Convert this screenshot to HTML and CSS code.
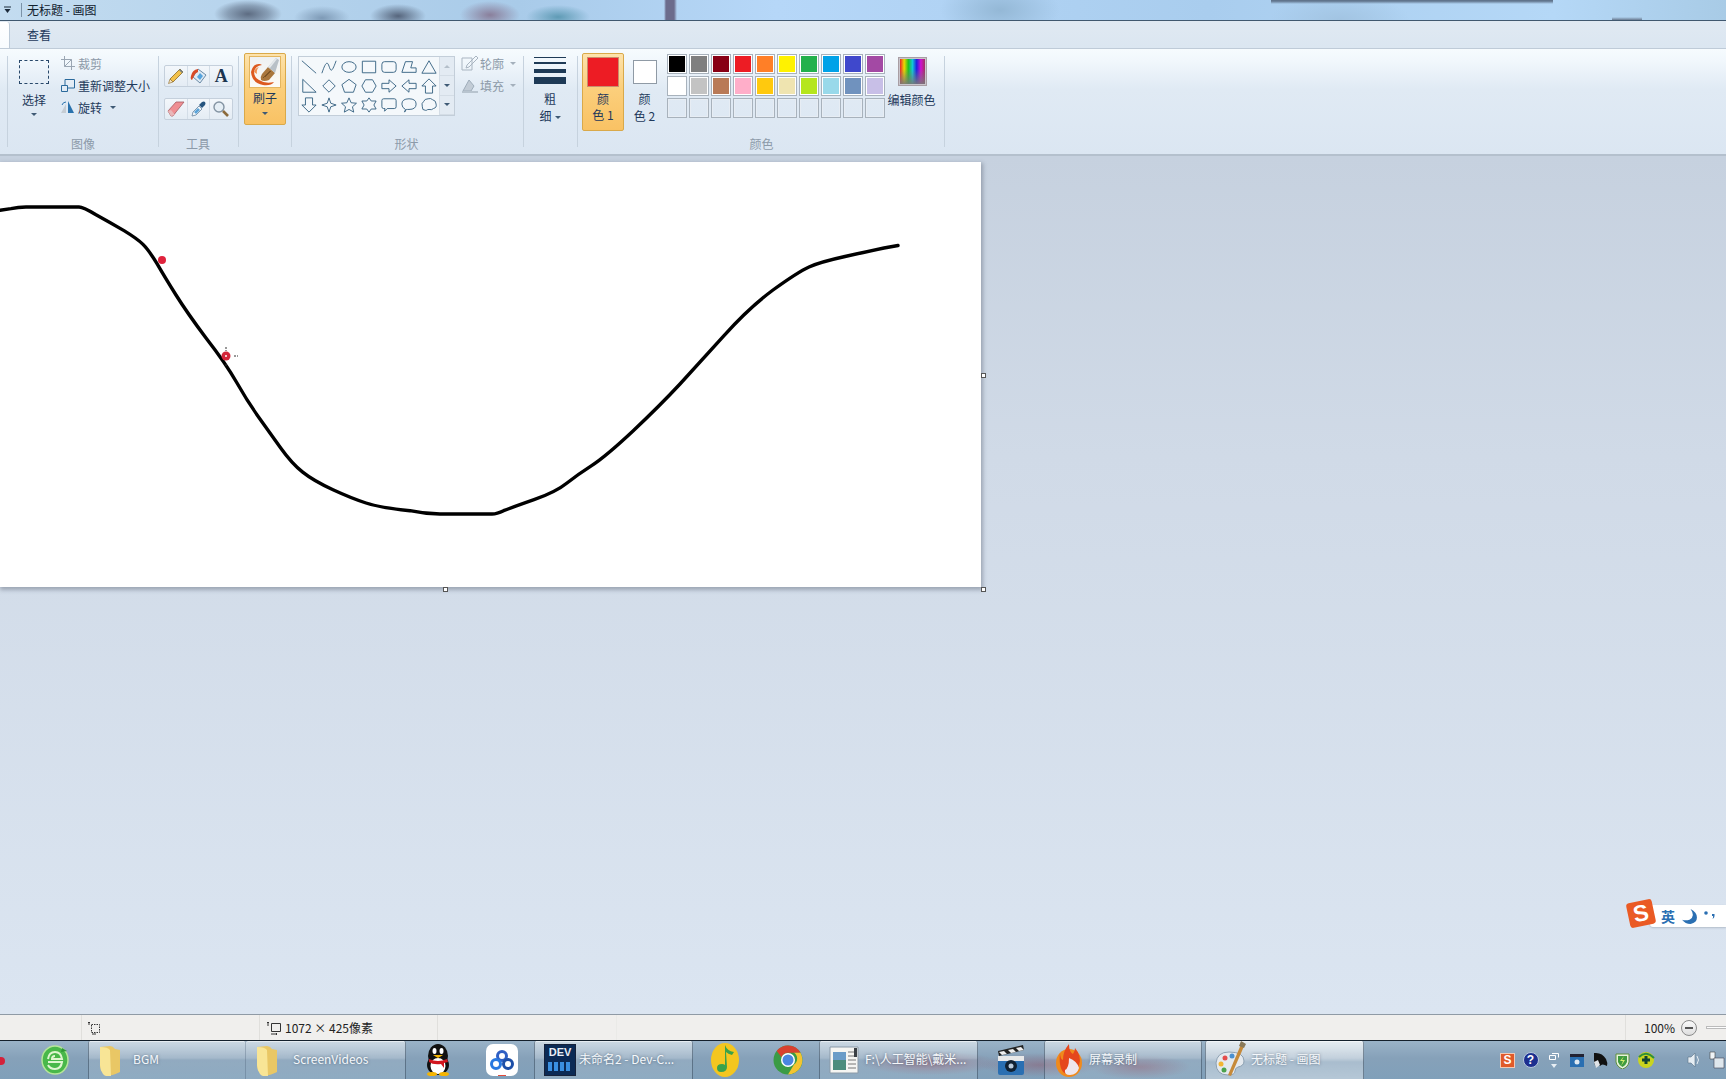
FILE: index.html
```html
<!DOCTYPE html>
<html lang="zh">
<head>
<meta charset="utf-8">
<title>无标题 - 画图</title>
<link rel="stylesheet" href="styles.css">
</head>
<body>
<div class="app">
  <header class="titlebar">
    <svg class="qat" width="10" height="8" viewBox="0 0 10 8"><path d="M1 1h7" stroke="#1b2a3a"/><path d="M1.500 3h6L4.500 7z" fill="#1b2a3a"/></svg>
    <span class="title-sep"></span>
    <span class="title-text">无标题 - 画图</span>
  </header>
  <nav class="tabs"><span class="home-tab"></span><span class="tab">查看</span></nav>

  <section class="ribbon">
    <div class="group g-image">
      <div class="group-body">
        <div class="select-col">
          <span class="select-icon"></span>
          <span class="lbl">选择</span>
          <span class="arrow"></span>
        </div>
        <div class="cmd-col">
          <div class="cmd off"><svg width="14" height="14" viewBox="0 0 14 14" fill="none" stroke="#9aa6b3"><path d="M3.500 0v10.500H14M0 3.500h10.500V14M3.500 10.500l7-7"/></svg><span>裁剪</span></div>
          <div class="cmd"><svg width="14" height="14" viewBox="0 0 14 14" fill="none" stroke="#2b6a9c"><path d="M.5 7.500h6v6h-6zM4 7V1.500h9.500V10H7"/></svg><span>重新调整大小</span></div>
          <div class="cmd"><svg width="14" height="14" viewBox="0 0 14 14"><path d="M7 1l6 12H7z" fill="#2a72ad"/><path d="M5 4L0 13h5z" fill="#c5ccd3"/><path d="M1 5q1-3 4-3" fill="none" stroke="#2a72ad"/></svg><span>旋转</span><span class="arrow inl"></span></div>
        </div>
      </div>
      <div class="group-label">图像</div>
    </div>

    <div class="group g-tools">
      <div class="group-body tools-body">
        <div class="toolrow">
          <span class="tool"><svg width="18" height="18" viewBox="0 0 18 18"><path d="M3 12L13 2l3 3L6 15z" fill="#f2c14b" stroke="#8d6a25" stroke-width=".8"/><path d="M3 12l-1.500 4.500L6 15z" fill="#f3e1c0" stroke="#8d6a25" stroke-width=".6"/><path d="M12 3l3 3 1-1-3-3z" fill="#6b7c8a"/></svg></span>
          <span class="tool"><svg width="20" height="18" viewBox="0 0 20 18"><path d="M9 2l8 6-6 8-7-6z" fill="#dfeaf4" stroke="#6a8aa6"/><path d="M8 10l3-4 3 3-3 4z" fill="#56a3dd"/><path d="M9 2Q3 3 2 9q-1 3 1 4l2-4q1-3 4-4z" fill="#d84a28"/></svg></span>
          <span class="tool txt">A</span>
        </div>
        <div class="toolrow">
          <span class="tool"><svg width="20" height="18" viewBox="0 0 20 18"><path d="M2 11l8-9h8l-8 10-3 4H5z" fill="#ef8f93" stroke="#a65c62" stroke-width=".8"/><path d="M5 16l-3-5 3-1 4 5z" fill="#e9b7b9"/></svg></span>
          <span class="tool"><svg width="18" height="18" viewBox="0 0 18 18"><path d="M2 16l1-4 6-6 3 3-6 6z" fill="#f3f7fa" stroke="#7590a8" stroke-width=".9"/><path d="M9 5l3-3q2-1 3 0t0 3l-3 3z" fill="#25547f"/><path d="M4 12l4-4 2 2-4 4z" fill="#5aa3d8"/></svg></span>
          <span class="tool"><svg width="18" height="18" viewBox="0 0 18 18"><circle cx="7" cy="7" r="5" fill="#e5eef5" stroke="#8494a3" stroke-width="1.400"/><path d="M11 11l5 5" stroke="#8b6a3c" stroke-width="2.600"/></svg></span>
        </div>
      </div>
      <div class="group-label">工具</div>
    </div>

    <div class="group g-brush">
      <div class="group-body">
        <div class="brush-btn">
          <span class="brush-icon"><svg width="30" height="30" viewBox="0 0 30 30"><path d="M1 15Q3 6 10 7l2 1Q5 9 4 15q0 5 5 8 6 4 15 2-3 4-11 3Q2 26 1 15z" fill="#dd5a1f"/><path d="M4 15q1-4 5-5-3 3-2 7z" fill="#f09050"/><path d="M12 17l6-7 7 6-6 7q-5 2-8 0-1-3 1-6z" fill="#a9763c"/><path d="M15 20l6-6M13 21l7-7" stroke="#7d5425"/><path d="M18 10l8-9 3 2-4 13z" fill="#b8c0c7"/><path d="M18 10l8-9 1 1-7 9z" fill="#e4e8eb"/></svg></span>
          <span class="lbl">刷子</span>
          <span class="arrow"></span>
        </div>
      </div>
    </div>

    <div class="group g-shapes">
      <div class="group-body">
        <div class="gallery">
          <div class="shape-grid">
            <svg class="sh" viewBox="0 0 18 18"><path d="M1 2l16 14"/></svg>
            <svg class="sh" viewBox="0 0 18 18"><path d="M1 16C5 4 7 2 9 8s3 8 8-6"/></svg>
            <svg class="sh" viewBox="0 0 18 18"><ellipse cx="9" cy="9" rx="8" ry="6"/></svg>
            <svg class="sh" viewBox="0 0 18 18"><path d="M1.500 2.500h15v13h-15z"/></svg>
            <svg class="sh" viewBox="0 0 18 18"><rect x="1" y="3" width="16" height="12" rx="3"/></svg>
            <svg class="sh" viewBox="0 0 18 18"><path d="M1 15L5 3h8l-2 7h6v5z"/></svg>
            <svg class="sh" viewBox="0 0 18 18"><path d="M9 2l8 14H1z"/></svg>
            <svg class="sh" viewBox="0 0 18 18"><path d="M2 1.500V16h15z"/></svg>
            <svg class="sh" viewBox="0 0 18 18"><path d="M9 2l7 7-7 7-7-7z"/></svg>
            <svg class="sh" viewBox="0 0 18 18"><path d="M9 1.500l8 6-3 8.500H4L1 7.500z"/></svg>
            <svg class="sh" viewBox="0 0 18 18"><path d="M5 2h8l4 7-4 7H5L1 9z"/></svg>
            <svg class="sh" viewBox="0 0 18 18"><path d="M1 6h8V2l8 7-8 7v-4H1z"/></svg>
            <svg class="sh" viewBox="0 0 18 18"><path d="M17 6H9V2L1 9l8 7v-4h8z"/></svg>
            <svg class="sh" viewBox="0 0 18 18"><path d="M9 1l8 8h-4v8H5V9H1z"/></svg>
            <svg class="sh" viewBox="0 0 18 18"><path d="M5 1h8v8h4l-8 8-8-8h4z"/></svg>
            <svg class="sh" viewBox="0 0 18 18"><path d="M9 1l2 6 6 2-6 2-2 6-2-6-6-2 6-2z"/></svg>
            <svg class="sh" viewBox="0 0 18 18"><path d="M9 1l2.400 5.500 6 .5-4.500 4 1.400 6L9 14l-5.300 3 1.400-6L.6 7l6-.5z"/></svg>
            <svg class="sh" viewBox="0 0 18 18"><path d="M9 1l2.500 3.500H17l-2.500 4.500 2.500 4.500h-5.500L9 17l-2.500-3.500H1L3.500 9 1 4.500h5.500z"/></svg>
            <svg class="sh" viewBox="0 0 18 18"><path d="M3 2h12q2 0 2 2v7q0 2-2 2H7l-3 3 .5-3H3q-2 0-2-2V4q0-2 2-2z"/></svg>
            <svg class="sh" viewBox="0 0 18 18"><path d="M5 14Q1 12 1 8q0-6 8-6t8 6-8 6q-2 0-3 0l-2 3z"/></svg>
            <svg class="sh" viewBox="0 0 18 18"><path d="M5 15Q1 15 1.500 11 0 7 3 5q1-3 5-3 3-1 5 1 4 1 4 5 1 4-3 5-2 2-5 1-2 0-3 1z"/></svg>
          </div>
          <div class="gallery-scroll">
            <span class="gs up"></span>
            <span class="gs down"></span>
            <span class="gs more"></span>
          </div>
        </div>
        <div class="style-col">
          <div class="cmd off"><svg width="18" height="16" viewBox="0 0 18 16" fill="none" stroke="#a9b5c1"><path d="M1 3h10v12H1zM6 10l9-9 2 2-9 9-3 1z"/></svg><span>轮廓</span><span class="arrow inl"></span></div>
          <div class="cmd off"><svg width="18" height="16" viewBox="0 0 18 16"><path d="M2 14l6-11 5 6-3 5z" fill="#c2ccd6" stroke="#9fadba"/><path d="M1 14h16v2H1z" fill="#b8c4cf"/></svg><span>填充</span><span class="arrow inl"></span></div>
        </div>
      </div>
      <div class="group-label shapes-label">形状</div>
    </div>

    <div class="group g-size">
      <div class="group-body size-body">
        <div class="size-lines"><i class="l1"></i><i class="l2"></i><i class="l3"></i><i class="l4"></i></div>
        <span class="lbl">粗</span>
        <span class="lbl">细<span class="arrow inl"></span></span>
      </div>
    </div>

    <div class="group g-colors">
      <div class="group-body">
        <div class="color-btn active">
          <span class="swatch-big"></span>
          <span class="lbl">颜</span>
          <span class="lbl">色 1</span>
        </div>
        <div class="color-btn second">
          <span class="swatch-small"></span>
          <span class="lbl">颜</span>
          <span class="lbl">色 2</span>
        </div>
        <div class="palette">
          <span class="c" style="--c:#000000"></span><span class="c" style="--c:#7f7f7f"></span><span class="c" style="--c:#880015"></span><span class="c" style="--c:#ed1c24"></span><span class="c" style="--c:#ff7f27"></span><span class="c" style="--c:#fff200"></span><span class="c" style="--c:#22b14c"></span><span class="c" style="--c:#00a2e8"></span><span class="c" style="--c:#3f48cc"></span><span class="c" style="--c:#a349a4"></span>
          <span class="c" style="--c:#ffffff"></span><span class="c" style="--c:#c3c3c3"></span><span class="c" style="--c:#b97a57"></span><span class="c" style="--c:#ffaec9"></span><span class="c" style="--c:#ffc90e"></span><span class="c" style="--c:#efe4b0"></span><span class="c" style="--c:#b5e61d"></span><span class="c" style="--c:#99d9ea"></span><span class="c" style="--c:#7092be"></span><span class="c" style="--c:#c8bfe7"></span>
          <span class="c e"></span><span class="c e"></span><span class="c e"></span><span class="c e"></span><span class="c e"></span><span class="c e"></span><span class="c e"></span><span class="c e"></span><span class="c e"></span><span class="c e"></span>
        </div>
        <div class="edit-col">
          <span class="rainbow"></span>
          <span class="lbl">编辑颜色</span>
        </div>
      </div>
      <div class="group-label">颜色</div>
    </div>
  </section>

  <main class="workspace">
    <div class="canvas">
      <svg class="drawing" width="981" height="425" viewBox="0 0 981 425">
        <path d="M0 48.300L11 46.600Q18 45 26 45L79 45Q83 45 96 52.700Q110 60.400 124 68.600Q137.600 76.900 143 82.400Q148.600 87.900 157 101.600Q165 115.400 176 133Q187 150.600 206 176Q225.700 201.300 236.700 220.500Q247.700 239.800 258.700 255.200Q269.700 270.600 280.700 286Q291.700 301.400 302.700 310.200Q313.700 319 333 327.800Q352.300 336.700 366 341Q379.800 345.500 410 348.700Q425 352 440 352L492 352Q497 352 503.600 348.700Q511.900 345.500 534 337.700Q555.900 330 567 321Q577.900 312.400 591.600 303.600Q605.400 294.800 633 269Q660.500 243 680 222Q699 201.300 724 173.700Q748.500 146.200 773 128Q798 110 809 105Q820 100 845 94.500Q869.600 89 884 86L898 83.500" fill="none" stroke="#000" stroke-width="3.400" stroke-linecap="round" stroke-linejoin="round"/>
        <circle cx="162" cy="98" r="4" fill="#e0233d"/>
        <circle cx="226" cy="194" r="4.500" fill="#d3263a"/>
        <circle cx="226" cy="194" r="1" fill="#fff"/>
        <path d="M226 185v2M226 188v1M234 194h2M237 194h1M226 202v2" stroke="#333" fill="none"/>
      </svg>
      <span class="handle h-r"></span>
      <span class="handle h-b"></span>
      <span class="handle h-c"></span>
    </div>
    <div class="ime">
      <span class="ime-s">S</span>
      <span class="ime-ying">英</span>
      <svg class="ime-moon" width="17" height="17" viewBox="0 0 16 16"><path d="M9 1q5 7-1 10-4 1-7 0 3 4 8 4 6-1 6-6 0-5-6-8z" fill="#2a6fb2"/></svg>
      <svg class="ime-dots" width="14" height="14" viewBox="0 0 14 14"><circle cx="3" cy="4" r="1.800" fill="#2a6fb2"/><path d="M9 5h2.500v2q0 2-2 3 1-2 .5-3H9z" fill="#2a6fb2"/></svg>
    </div>
  </main>

  <footer class="statusbar">
    <span class="pane p1"></span>
    <span class="pane p2"><svg width="14" height="14" viewBox="0 0 14 14" fill="none" stroke="#333"><path d="M3.500 3.500h8v8h-8z" stroke-dasharray="1.500 1"/><path d="M1 4V1M0 2l1-1 1 1M4 13h4" /></svg></span>
    <span class="pane p3"><svg width="16" height="14" viewBox="0 0 16 14" fill="none" stroke="#333"><path d="M5.500 2.500h9v8h-9z"/><path d="M2 5V1M1 2l1-1 1 1M5 13h6M10 12l1 1-1 1"/></svg><span>1072 × 425像素</span></span>
    <span class="pane p4"></span>
    <span class="pane p5"></span>
    <span class="zoom"><span class="zoom-val">100%</span><span class="zoom-minus"></span><span class="zoom-track"></span></span>
  </footer>

  <div class="taskbar">
    <span class="start-area">
      <span class="red-bit"></span>
      <svg class="ie" width="30" height="32" viewBox="0 0 30 32"><ellipse cx="15" cy="16" rx="13" ry="14" fill="#49b84a" stroke="#b6e59a" stroke-width="1.500"/><path d="M8 15q1-7 7-7 6 0 7 7H12q0-3 3-3M8 18h14q-1 7-7 7-5 0-7-4" fill="none" stroke="#dff5d0" stroke-width="2"/><path d="M22 4l5 3-6 1z" fill="#2f9a35"/></svg>
    </span>
    <div class="tb t-bgm"><svg class="ic" width="24" height="32" viewBox="0 0 24 32"><path d="M1 3l10-1q3 0 5 3l5 1v22q-9 5-14 2-5-2-6-8z" fill="#e9c765"/><path d="M1 3q8 0 10 3l1 26q-6 1-8-2-3-4-3-9z" fill="#f8e596"/></svg><span class="tb-text">BGM</span></div>
    <div class="tb t-sv"><svg class="ic" width="24" height="32" viewBox="0 0 24 32"><path d="M1 3l10-1q3 0 5 3l5 1v22q-9 5-14 2-5-2-6-8z" fill="#e9c765"/><path d="M1 3q8 0 10 3l1 26q-6 1-8-2-3-4-3-9z" fill="#f8e596"/></svg><span class="tb-text">ScreenVideos</span></div>
    <span class="slot s64"><svg width="28" height="34" viewBox="0 0 28 34"><ellipse cx="14" cy="13" rx="10" ry="12" fill="#111"/><ellipse cx="14" cy="22" rx="11" ry="10" fill="#111"/><ellipse cx="14" cy="23" rx="7.500" ry="8" fill="#fff"/><ellipse cx="10.500" cy="8" rx="2" ry="3" fill="#fff"/><ellipse cx="17.500" cy="8" rx="2" ry="3" fill="#fff"/><path d="M9 12h10l-5 3z" fill="#f6b500"/><path d="M5 16q9 4 18 0l1 3-4 1v5l-3-4q-8 1-12-2z" fill="#d2161e"/><ellipse cx="8" cy="31" rx="5" ry="2" fill="#f6b500"/><ellipse cx="20" cy="31" rx="5" ry="2" fill="#f6b500"/></svg></span>
    <span class="slot s64"><svg width="32" height="32" viewBox="0 0 32 32"><rect width="32" height="32" rx="7" fill="#fff"/><circle cx="16" cy="12" r="4.500" fill="none" stroke="#2f5fc4" stroke-width="3"/><circle cx="10" cy="20" r="4.500" fill="none" stroke="#2878e0" stroke-width="3"/><circle cx="22" cy="20" r="4.500" fill="none" stroke="#1d4fa8" stroke-width="3"/><path d="M12 31h8v1h-8z" fill="#e04a3a"/></svg></span>
    <div class="tb t-dev"><span class="dev-ic"><b>DEV</b><i></i></span><span class="tb-text">未命名2 - Dev-C...</span></div>
    <span class="slot s64"><svg width="30" height="36" viewBox="0 0 30 36"><ellipse cx="15" cy="18" rx="14" ry="17" fill="#f4c61f"/><path d="M15 3q2 6 9 7l-2 3q-4-1-6-3l1 15q0 5-6 5-4 0-4-4t5-4q2 0 3 1z" fill="#3aa24a"/></svg></span>
    <span class="slot s62"><svg width="30" height="36" viewBox="0 0 30 36"><circle cx="15" cy="18" r="14.500" fill="#3a9b45"/><path d="M15 3.500a14.500 14.500 0 0 1 12.500 7.300H15a7 7 0 0 0-6.500 4.500L3.700 9A14.500 14.500 0 0 1 15 3.500z" fill="#d8402f"/><path d="M27.500 10.800A14.500 14.500 0 0 1 15 32.500l6-10a7 7 0 0 0 0-11.700z" fill="#f4c430"/><circle cx="15" cy="18" r="7" fill="#fff"/><circle cx="15" cy="18" r="5.500" fill="#4a86e0"/></svg></span>
    <div class="tb t-f"><svg class="ic" width="30" height="30" viewBox="0 0 30 30"><path d="M1 2h28v26H1z" fill="#f5f5f2" stroke="#8b9aa8"/><path d="M4 7h13v18H4z" fill="#4c8d7d"/><path d="M4 7h13v8H4z" fill="#6a9cc8"/><path d="M19 7h8M19 11h8M19 15h8M19 19h8M19 23h8" stroke="#777"/><path d="M25 3h3v9h-3z" fill="#3a3f44"/></svg><span class="tb-text">F:\人工智能\戴米...</span></div>
    <span class="slot s66"><svg width="28" height="32" viewBox="0 0 28 32"><path d="M1 7l25-6 1 5-25 6z" fill="#222"/><path d="M2 8l5-1 3 3-5 1zM11 6l5-1 3 3-5 1zM19 4l5-1 3 3-5 1z" fill="#eee"/><rect x="1" y="12" width="26" height="19" rx="2" fill="#2a6fb2"/><rect x="1" y="12" width="26" height="5" fill="#e9e9e9"/><circle cx="14" cy="22" r="6" fill="#123"/><circle cx="14" cy="22" r="2.500" fill="#bcd"/></svg></span>
    <div class="tb t-rec"><svg class="ic" width="28" height="36" viewBox="0 0 28 36"><ellipse cx="14" cy="21" rx="13" ry="14" fill="#f08a1c"/><path d="M5 10q0 7 3 8 0-9 6-16 0 8 4 10 2-3 2-6 7 8 4 17-3 10-12 9Q3 30 5 10z" fill="#e5471d"/><path d="M14 16q8 3 10 10-2 7-9 7-6 0-5-5 4-2 4-12z" fill="#eee6ee"/></svg><span class="tb-text">屏幕录制</span></div>
    <div class="tb t-paint active"><svg class="ic" width="32" height="38" viewBox="0 0 32 38"><path d="M14 11Q2 11 1 22q0 12 12 12 7 0 7-4 0-3 3-4 6-1 6-6 0-9-15-9z" fill="#e4e9ee" stroke="#8da1b2"/><circle cx="10" cy="17" r="2.500" fill="#e34c4c"/><circle cx="6" cy="23" r="2.500" fill="#f3b533"/><circle cx="9" cy="29" r="2.500" fill="#4ca24c"/><circle cx="17" cy="15" r="2.500" fill="#4a90d0"/><path d="M27 1l3 2-14 32-3-1z" fill="#c68a3a"/><path d="M26 0l5 3-2 4-5-2z" fill="#8a7a5a"/></svg><span class="tb-text">无标题 - 画图</span></div>
    <div class="tray">
      <span class="tr"><span class="tr-s">S</span></span>
      <span class="tr"><span class="tr-help">?</span></span>
      <span class="tr"><svg width="12" height="18" viewBox="0 0 12 18"><path d="M1.500 4.500h6v4h-6zM4 2.500h6.500v4" fill="none" stroke="#fff"/><path d="M3 13h6l-3 4z" fill="#e8eef4"/></svg></span>
      <span class="tr"><svg width="16" height="14" viewBox="0 0 16 14"><rect x="1" y="4" width="14" height="10" fill="#2a6fb2"/><path d="M1 1h14v3H1z" fill="#223"/><circle cx="8" cy="9" r="2.500" fill="#dfe9f2"/></svg></span>
      <span class="tr"><svg width="18" height="16" viewBox="0 0 18 16"><path d="M3 1q8-1 12 6 2 4 1 7-5-3-7 0-2-2-4 1-2-3-2-7z" fill="#111"/><path d="M3 10l4-2 2 5-4 3z" fill="#dfe3e8"/></svg></span>
      <span class="tr"><svg width="15" height="17" viewBox="0 0 15 17"><path d="M1 2h13v8q-1 5-6.500 7Q2 15 1 10z" fill="#e7f2da" stroke="#5e8f3e"/><path d="M3 4h9v6q-1 3-4.500 5Q4 13 3 10z" fill="#3f9b3f"/><path d="M9 4L5 9h3l-2 5 4-6H7z" fill="#d7ef6a"/></svg></span>
      <span class="tr"><svg width="18" height="16" viewBox="0 0 18 16"><circle cx="9" cy="8" r="8" fill="#c9d41f"/><path d="M2 5q7-7 15 1" fill="none" stroke="#2e8f3a" stroke-width="2"/><path d="M7.500 4h3v2.500H13v3h-2.500V12h-3V9.500H5v-3h2.500z" fill="#143"/></svg></span>
      <span class="tr tr-vol"><svg width="14" height="16" viewBox="0 0 14 16"><path d="M1 5h3l4-4v14l-4-4H1z" fill="#e6edf3" stroke="#5a7288" stroke-width=".6"/><path d="M10 4q3 4 0 8" fill="none" stroke="#e6edf3"/></svg></span>
      <span class="tr"><svg width="16" height="18" viewBox="0 0 16 18"><path d="M1 1h5v7H1z" fill="#f0f4f7" stroke="#444" stroke-width=".6"/><path d="M5 7h10v10H5z" fill="#dfe7ed" stroke="#445" stroke-width=".6"/></svg></span>
    </div>
  </div>
</div>
</body>
</html>
```

FILE: styles.css
```css
* { box-sizing: border-box; }
html, body { margin: 0; height: 100%; overflow: hidden; }
body { font-family: "Noto Sans CJK SC", "Noto Sans", sans-serif; font-size: 12px; color: #1e395b; }
.app { width: 1726px; height: 1079px; display: flex; flex-direction: column; overflow: hidden; }

/* title bar */
.titlebar {
  height: 21px; flex: none; display: flex; align-items: center; padding-left: 3px;
  border-bottom: 1px solid #40586f;
  background:
    radial-gradient(ellipse 34px 14px at 248px 14px, #5d6c82 0%, rgba(93,108,130,.5) 60%, rgba(93,108,130,0) 100%),
    radial-gradient(ellipse 28px 12px at 322px 18px, #7e9ab6 0%, rgba(126,154,182,0) 100%),
    radial-gradient(ellipse 28px 12px at 398px 16px, #56657c 0%, rgba(86,101,124,0) 100%),
    radial-gradient(ellipse 30px 14px at 490px 15px, #8a7f9b 0%, rgba(138,127,155,0) 100%),
    radial-gradient(ellipse 32px 12px at 558px 17px, #5f9bb5 0%, rgba(95,155,181,0) 100%),
    linear-gradient(90deg, rgba(0,0,0,0) 664px, #6c6c8c 666px, #6c6c8c 674px, rgba(0,0,0,0) 677px),
    linear-gradient(180deg, #60748c 0, #60748c 1px, rgba(96,116,140,0) 4px) 1271px 0 / 282px 21px no-repeat,
    linear-gradient(180deg, rgba(90,100,120,0) 17px, #6a7a90 20px) 1612px 0 / 30px 21px no-repeat,
    radial-gradient(ellipse 60px 30px at 1000px 10px, #94b8d6 0%, rgba(148,184,214,0) 100%),
    radial-gradient(ellipse 70px 25px at 1340px 20px, #a2c4e2 0%, rgba(162,196,226,0) 100%),
    linear-gradient(90deg, #c3dcf0 0%, #a9cbe9 30%, #b6d7f8 45%, #a9cdee 70%, #b5d8f7 90%, #a8cbe6 100%);
}
.qat { margin-left: 0; }
.title-sep { width: 1px; height: 14px; background: #7b93a8; margin-left: 8px; }
.title-text { margin-left: 5px; color: #10202e; line-height: 20px; }

/* tabs */
.tabs {
  height: 27px; flex: none; display: flex; align-items: flex-end;
  background: linear-gradient(180deg, #e0e9f2, #dbe6f1);
}
.home-tab { width: 10px; height: 26px; background: linear-gradient(180deg, #fff, #f7fbfe); border-right: 1px solid #bccad8; border-top-right-radius: 3px; }
.tab { margin-left: 17px; line-height: 26px; height: 26px; }

/* ribbon */
.ribbon {
  height: 108px; flex: none; display: flex; padding-left: 7px; align-items: flex-start;
  border-top: 1px solid #bfcbd8; border-bottom: 2px solid #b4c0cd;
  background: linear-gradient(180deg, #f6fbfe 0, #f1f7fc 12px, #e0eaf4 40px, #dbe6f2 100%);
}
.group { height: 103px; flex: none; display: flex; flex-direction: column; position: relative; }
.group::after { content: ""; position: absolute; right: 0; top: 7px; bottom: 5px; width: 1px; background: #c6d2de; }
.g-image::before { content: ""; position: absolute; left: 0; top: 7px; bottom: 5px; width: 1px; background: #c6d2de; }
.group-body { flex: 1; display: flex; min-height: 0; }
.group-label { height: 16px; line-height: 16px; text-align: center; color: #8c9aa9; flex: none; }
.shapes-label { padding-right: 3px; }
.g-image { width: 152px; }
.g-tools { width: 80px; }
.g-tools .group-label { padding-right: 2px; }
.g-brush { width: 53px; }
.g-shapes { width: 232px; }
.g-size { width: 54px; }
.g-colors { width: 367px; }

.lbl { display: block; line-height: 17px; text-align: center; white-space: nowrap; }
.arrow { display: block; width: 0; height: 0; margin: 5px auto 0; border: 3px solid transparent; border-top: 3px solid #3f5a75; border-bottom: 0; }
.arrow.inl { display: inline-block; margin: 0 0 0 5px; vertical-align: middle; }

.select-col { width: 30px; margin-left: 12px; padding-top: 11px; }
.select-icon { display: block; width: 30px; height: 24px; border: 1px dashed #28486a; }
.select-col .lbl { margin-top: 7px; }
.cmd-col { margin-left: 12px; padding-top: 3px; }
.cmd { height: 22px; display: flex; align-items: center; gap: 3px; white-space: nowrap; }
.cmd svg { flex: none; }
.cmd.off { color: #8d9aa8; }

.tools-body { flex-direction: column; padding: 16px 0 0 5px; gap: 11px; }
.toolrow { width: 69px; height: 22px; display: flex; border: 1px solid #c5d0dc; border-radius: 2px; background: linear-gradient(180deg, #f3f7fb, #e4ecf4); }
.tool { flex: 1; display: flex; align-items: center; justify-content: center; border-right: 1px solid #d3dde7; }
.tool:last-child { border-right: 0; }
.tool.txt { font-family: "Liberation Serif", serif; font-weight: 700; font-size: 18px; color: #1c3550; }

.brush-btn {
  width: 42px; height: 72px; margin: 4px 0 0 5px; padding-top: 2px; text-align: center;
  border: 1px solid #d9a94a; border-radius: 2px;
  background: linear-gradient(180deg, #fde3ac 0%, #fbcf7c 45%, #f9c264 100%);
}
.brush-icon { display: block; width: 32px; height: 32px; margin: 0 auto 1px; border: 1px solid #e3b660; background: linear-gradient(#eef1f3, #fdfaf4); }
.brush-btn .lbl { margin-top: 1px; color: #1e395b; }
.brush-btn .arrow { margin-top: 6px; }

.gallery { width: 157px; height: 60px; margin: 7px 0 0 6px; display: flex; border: 1px solid #c3ced9; background: #f4f8fb; }
.shape-grid { width: 140px; display: grid; grid-template-columns: repeat(7, 20px); grid-template-rows: repeat(3, 19.33px); align-items: center; justify-items: center; }
.sh { width: 16px; height: 16px; fill: none; stroke: #2f5d7d; stroke-width: 1; display: block; }
.gallery-scroll { flex: 1; display: flex; flex-direction: column; border-left: 1px solid #d4dde6; background: #e3ebf3; }
.gs { flex: 1; display: flex; align-items: center; justify-content: center; border-bottom: 1px solid #d4dde6; }
.gs::before { content: ""; border: 3px solid transparent; }
.gs.up::before { border-bottom: 3px solid #b4bfca; border-top: 0; }
.gs.down::before { border-top: 3px solid #3f5a75; border-bottom: 0; }
.gs.more::before { border-top: 3px solid #3f5a75; border-bottom: 0; box-shadow: 0 -3px 0 -2px #3f5a75; }
.style-col { margin-left: 6px; padding-top: 3px; }
.style-col .cmd { gap: 1px; }
.style-col .arrow.inl { border-top-color: #a4b0bc; }

.size-body { flex-direction: column; padding: 8px 0 0 10px; }
.size-lines { width: 32px; height: 27px; display: flex; flex-direction: column; }
.size-lines i { display: block; background: #1e3a56; }
.size-lines .l1 { height: 1px; }
.size-lines .l2 { height: 2px; margin-top: 4px; }
.size-lines .l3 { height: 4px; margin-top: 5px; }
.size-lines .l4 { height: 7px; margin-top: 4px; }
.size-body .lbl { width: 32px; }
.size-body .lbl:nth-child(2) { margin-top: 6px; }
.size-body .arrow.inl { margin-left: 3px; }

.color-btn { width: 42px; height: 78px; margin: 4px 0 0 4px; border: 1px solid transparent; border-radius: 2px; text-align: center; flex: none; }
.color-btn.active { border-color: #d9a94a; background: linear-gradient(180deg, #fde3ac 0%, #fbcf7c 45%, #f9c264 100%); padding-top: 3px; }
.color-btn.active .lbl { line-height: 16px; }
.swatch-big { display: block; width: 32px; height: 30px; margin: 0 auto 4px; background: #ed1c24; border: 1px solid #c98e6e; }
.color-btn.second { width: 41px; margin-left: 0; padding-top: 6px; }
.swatch-small { display: block; width: 24px; height: 24px; margin: 0 auto 6px; background: #fff; border: 1px solid #8f9aa5; }
.palette { display: grid; grid-template-columns: repeat(10, 20px); grid-template-rows: repeat(3, 20px); gap: 2px; margin: 5px 0 0 2px; height: 64px; }
.c { display: block; border: 1px solid #a8b2bc; background: var(--c); box-shadow: inset 0 0 0 1px #fff; }
.c.e { background: transparent; box-shadow: inset 0 0 0 1px #e7edf4; }
.edit-col { width: 52px; margin: 0 0 0 1px; padding-top: 8px; }
.rainbow {
  display: block; width: 29px; height: 29px; margin: 0 auto 5px; border: 2px solid #c9c5cb; outline: 1px solid #a89ea4; outline-offset: -1px;
  background: linear-gradient(180deg, rgba(255,255,255,0) 40%, rgba(120,120,120,.9) 100%), linear-gradient(90deg, #e8242a, #f0d800, #20c020, #10c8d8, #2020e0, #d010d0, #a03060);
}
.edit-col .lbl { margin-left: -1px; }

/* workspace */
.workspace { flex: 1; min-height: 0; padding-top: 6px; position: relative; background: linear-gradient(180deg, #c6d1df 0%, #d0dae7 35%, #dbe5f1 100%); }
.canvas { width: 981px; height: 425px; background: #fff; position: relative; box-shadow: 1px 2px 4px 1px rgba(90,100,115,.45); }
.drawing { display: block; }
.handle { position: absolute; width: 5px; height: 5px; background: #fff; border: 1px solid #555; }
.h-r { left: 981px; top: 211px; }
.h-b { left: 443px; top: 425px; }
.h-c { left: 981px; top: 425px; }

.ime { position: absolute; top: 749px; right: 0; width: 76px; height: 22px; background: #fff; display: flex; align-items: center; padding-left: 11px; border-radius: 3px 0 0 3px; box-shadow: 0 1px 2px rgba(90,100,115,.3); }
.ime-s { position: absolute; left: -22px; top: -4px; width: 26px; height: 25px; border-radius: 3px; background: #ea5a24; color: #fff; font: 700 23px/25px "Liberation Sans", sans-serif; text-align: center; transform: rotate(-12deg); }
.ime-ying { color: #2a6fb2; font-weight: 700; font-size: 14px; line-height: 20px; }
.ime-moon { margin-left: 6px; }
.ime-dots { margin-left: 5px; }

/* status bar */
.statusbar { height: 26px; flex: none; display: flex; background: #f0efed; border-top: 1px solid #8f9aa5; color: #222; }
.pane { display: flex; align-items: center; gap: 3px; border-right: 1px solid #e0dfdc; }
.p1 { width: 82px; }
.p2 { width: 178px; padding-left: 6px; }
.p3 { width: 178px; padding-left: 6px; }
.p4 { width: 179px; border-right-color: #eaeae7; }
.p5 { width: 1009px; }
.zoom { flex: 1; display: flex; align-items: center; }
.zoom-val { margin-left: 18px; }
.zoom-minus { width: 16px; height: 16px; margin-left: 6px; border-radius: 50%; border: 1px solid #8a8a8a; background: linear-gradient(90deg, #555, #555) center / 8px 2px no-repeat, linear-gradient(#fafafa, #dedede); }
.zoom-track { flex: 1; height: 3px; margin-left: 9px; background: #fdfdfd; border: 1px solid #bbb; border-right: 0; }

/* taskbar */
.taskbar {
  height: 39px; flex: none; display: flex; align-items: stretch; border-top: 1px solid #14202c;
  background:
    radial-gradient(ellipse 70px 12px at 930px 22px, rgba(150,90,110,.55), rgba(150,90,110,0)),
    radial-gradient(ellipse 60px 12px at 1040px 24px, rgba(140,80,100,.45), rgba(140,80,100,0)),
    radial-gradient(ellipse 50px 12px at 1140px 26px, rgba(140,80,100,.45), rgba(140,80,100,0)),
    linear-gradient(180deg, #9ab3c8 0%, #86a1b9 45%, #80a0ba 100%);
}
.start-area { width: 88px; flex: none; display: flex; align-items: center; position: relative; }
.red-bit { position: absolute; left: 0; top: 16px; width: 5px; height: 8px; background: #d4213a; border-radius: 0 4px 4px 0; }
.ie { margin-left: 40px; }
.tb {
  flex: none; display: flex; align-items: center; color: #f5f8fb; white-space: nowrap; overflow: hidden;
  border: 1px solid rgba(50,70,90,.55); border-width: 0 1px; border-radius: 2px 2px 0 0;
  background: linear-gradient(180deg, rgba(255,255,255,.5) 0%, rgba(255,255,255,.25) 45%, rgba(255,255,255,.1) 50%, rgba(255,255,255,.12) 100%);
  box-shadow: inset 0 1px 0 rgba(255,255,255,.5);
}
.tb-text { font-size: 12px; margin-top: -3px; text-shadow: 0 0 3px rgba(40,60,80,.6); }
.t-bgm { width: 158px; padding-left: 10px; border-right-color: rgba(70,90,110,.3); }
.t-bgm .tb-text { margin-left: 10px; }
.t-sv { width: 160px; padding-left: 10px; border-left: 0; }
.t-sv .tb-text { margin-left: 13px; }
.t-dev { width: 159px; padding-left: 9px; }
.t-dev .tb-text { margin-left: 3px; }
.dev-ic { width: 32px; height: 32px; flex: none; background: #0b2a55; color: #e8eef6; border: 1px solid #15213a; display: flex; flex-direction: column; align-items: center; font: 700 11px/14px "Liberation Sans", sans-serif; }
.dev-ic i { display: block; width: 24px; height: 9px; margin-top: 3px; background: repeating-linear-gradient(90deg, #3a8fe0 0 4px, #0b2a55 4px 6px); }
.t-f { width: 159px; padding-left: 9px; }
.t-f .tb-text { margin-left: 6px; }
.t-rec { width: 158px; padding-left: 10px; margin-right: 3px; }
.t-rec .tb-text { margin-left: 6px; }
.t-paint { width: 159px; padding-left: 9px; background: linear-gradient(180deg, rgba(255,255,255,.75) 0%, rgba(255,255,255,.5) 45%, rgba(255,255,255,.3) 55%, rgba(255,255,255,.42) 100%); }
.t-paint .tb-text { margin-left: 4px; }
.slot { flex: none; display: flex; align-items: center; justify-content: center; }
.s64 { width: 64px; }
.s62 { width: 62px; }
.s66 { width: 66px; }
.tray { flex: none; display: flex; align-items: center; margin-left: 132px; }
.tr { width: 23px; flex: none; display: flex; align-items: center; justify-content: center; }
.tr-vol { margin-left: 25px; }
.tr-s { width: 15px; height: 15px; background: #e05a2a; color: #fff; border: 1px solid #f2c9b5; font: 700 12px/13px "Liberation Sans", sans-serif; text-align: center; }
.tr-help { width: 16px; height: 16px; border-radius: 50%; background: #1c2f8f; color: #fff; border: 1px solid #b8c8de; font: 700 12px/14px "Liberation Sans", sans-serif; text-align: center; }
```
